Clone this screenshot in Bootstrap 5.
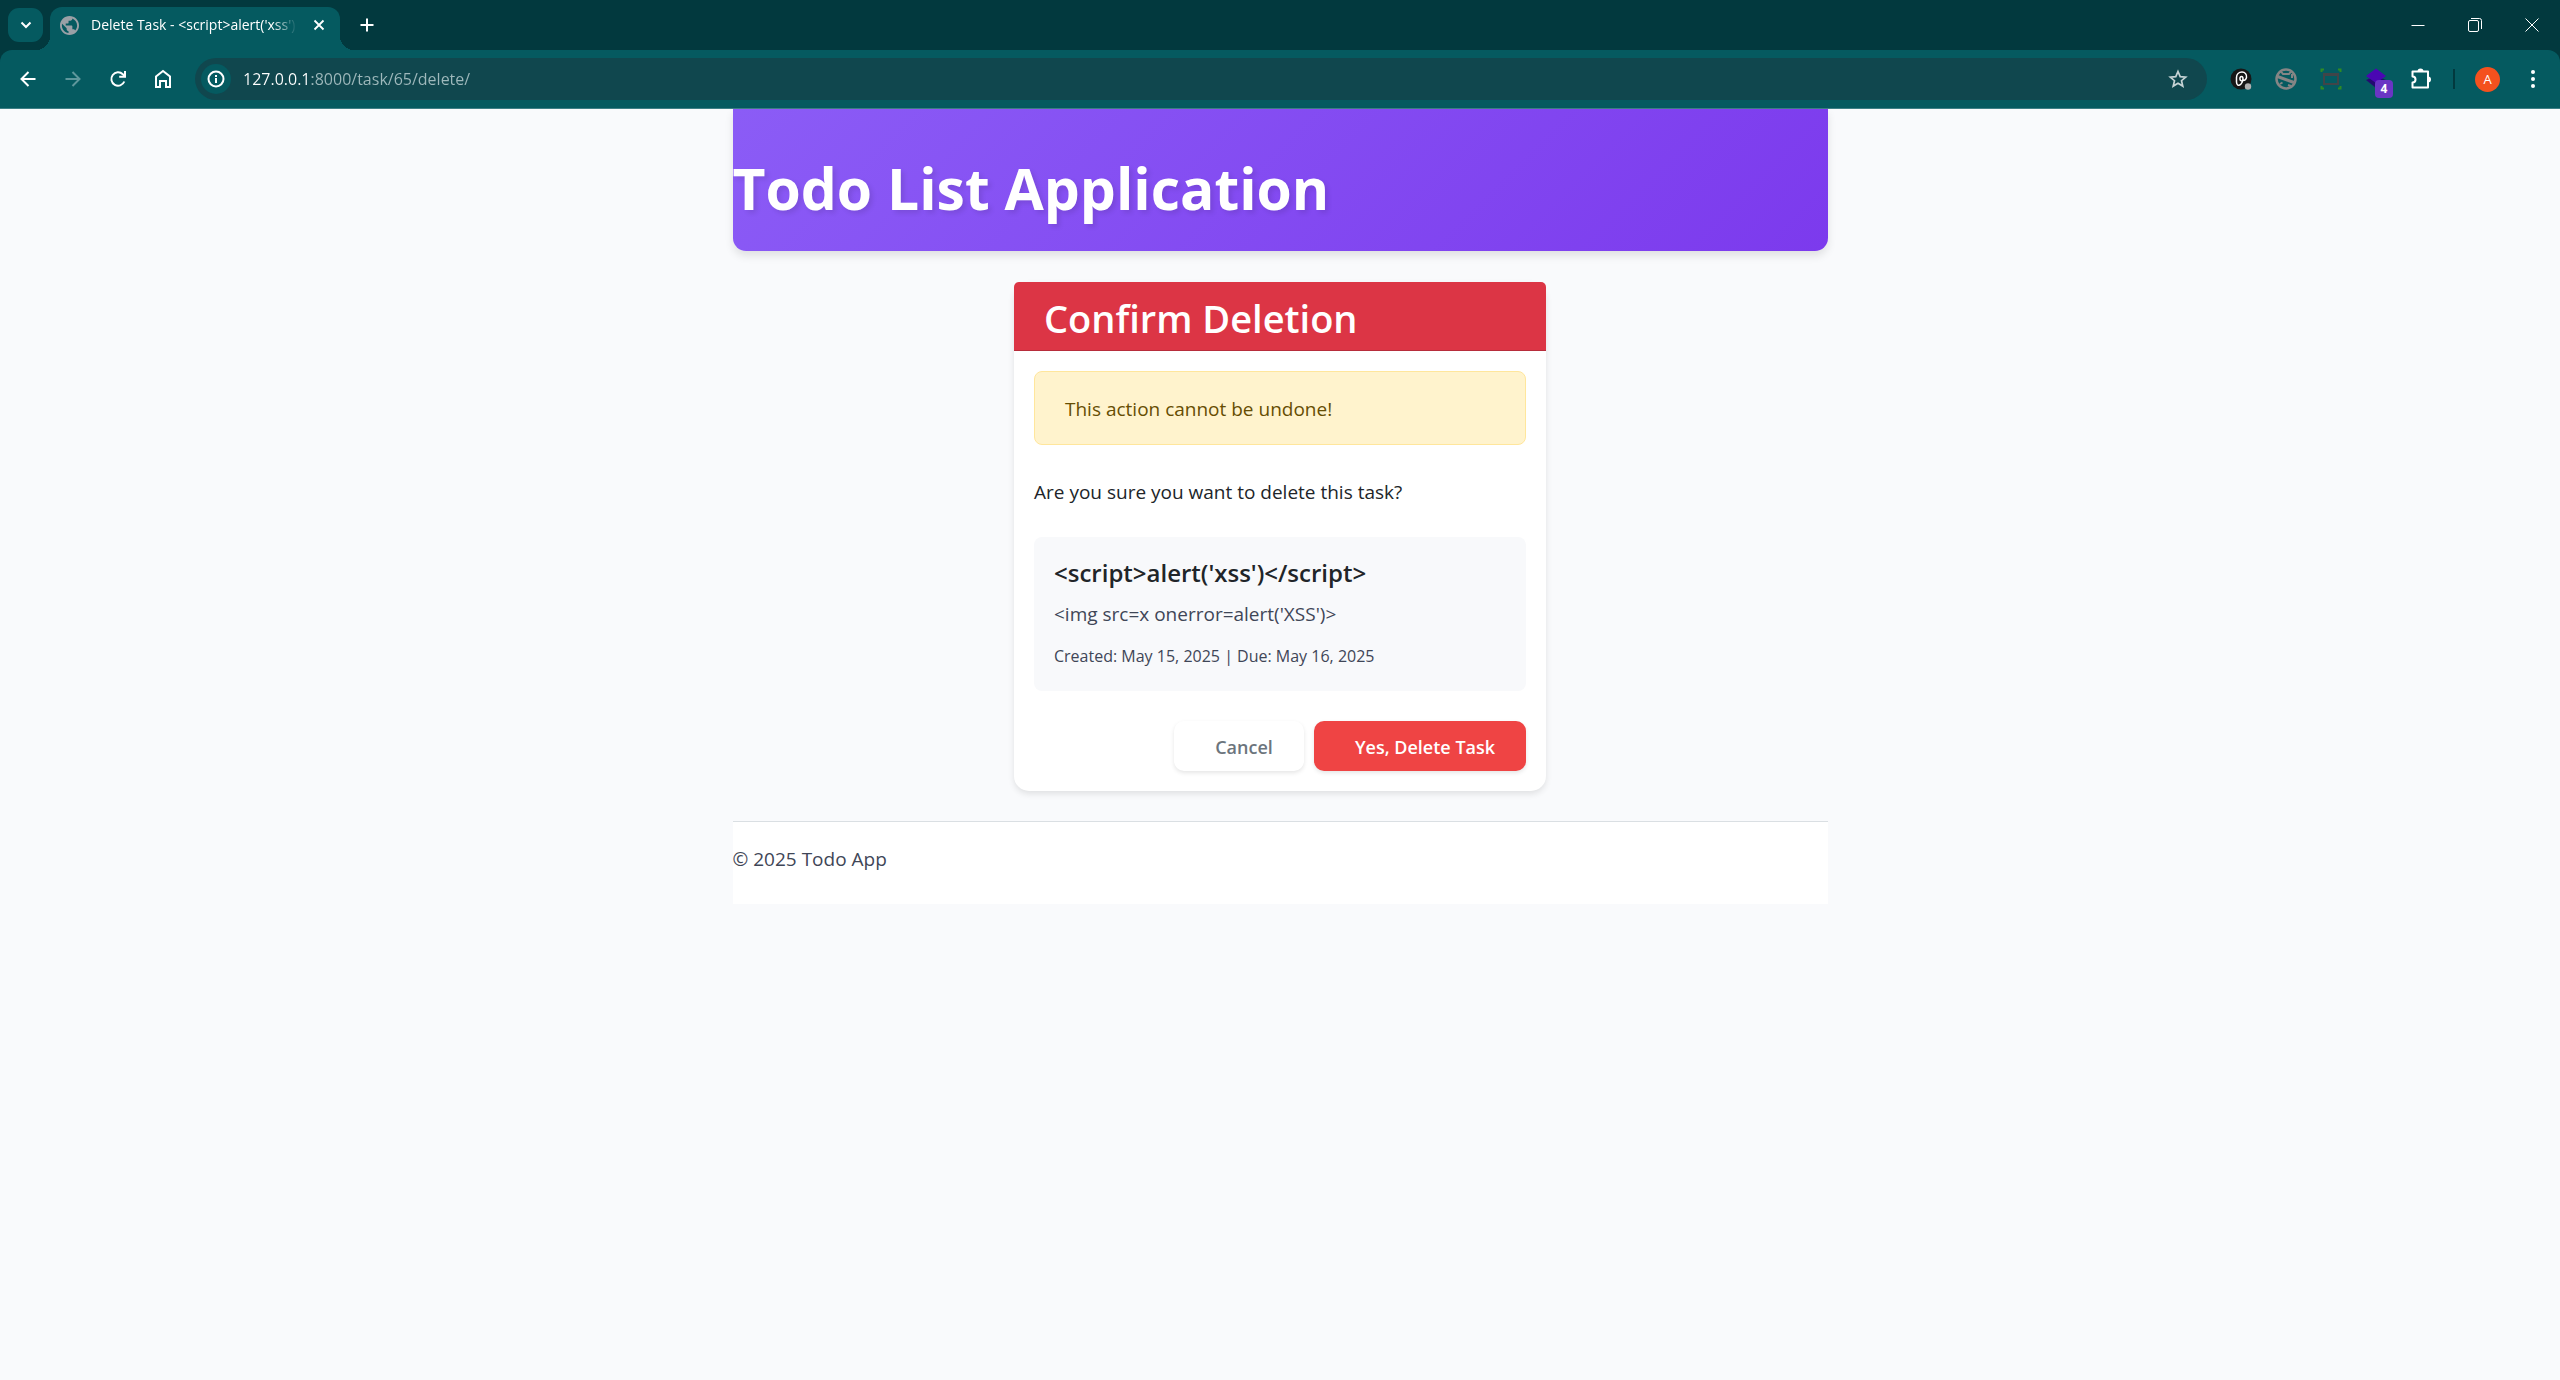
<!DOCTYPE html>
<html lang="en">
<head>
<meta charset="utf-8">
<meta name="viewport" content="width=device-width, initial-scale=1">
<title>Delete Task</title>
<link rel="stylesheet" href="https://cdn.jsdelivr.net/npm/bootstrap@5.3.0/dist/css/bootstrap.min.css">
<style>
body{font-family:"Open Sans","Noto Sans",sans-serif;font-size:19px;line-height:32px;background:#f9fafc;color:#212529}
/* browser window */
.tabstrip{height:50px;background:#02393e;color:#fff}
.tool-btn{border:0;background:none;padding:0;color:#fff;width:45px;height:42px;display:flex;align-items:center;justify-content:center;flex:none}
.tab-search{width:35px;height:34px;margin:8px 7px 8px 8px;border-radius:11px;background:#055a60}
.active-tab{width:290px;height:43px;margin-top:7px;padding:0 10px 7px;border-radius:12px 12px 0 0;background:#055a60;position:relative}
.active-tab::before,.active-tab::after{content:"";position:absolute;bottom:0;width:14px;height:14px}
.active-tab::before{left:-14px;background:radial-gradient(circle at 0 0,transparent 14px,#055a60 14px)}
.active-tab::after{right:-14px;background:radial-gradient(circle at 100% 0,transparent 14px,#055a60 14px)}
.tab-title{width:211px;font-size:14px;line-height:20px;white-space:nowrap;overflow:hidden;-webkit-mask-image:linear-gradient(90deg,#000 185px,transparent 210px)}
.close-tab{width:22px;height:22px}
.win-btn{width:57px}
.toolbar-wrap{background:#02393e}
.toolbar{height:59px;padding:8px 5px;border-bottom:1px solid #3d7f86;border-radius:12px 12px 0 0;background:#055a60}
.address{height:42px;border-radius:21px;background:#10474e;margin:0 11px 0 10px;padding:0 7px 0 6px;min-width:0}
.site-info{width:30px;height:30px;border-radius:50%;background:#055a60}
.address input{border:0;outline:0;font-size:16px;line-height:24px;padding:0;margin-left:12px;color:transparent;background:linear-gradient(90deg,#fff 69px,#9fb9bc 69px);-webkit-background-clip:text;background-clip:text;min-width:0}
.tool-divider{width:2px;height:20px;margin:0 10px;background:#02393e}
.avatar{width:25px;height:25px;border-radius:50%;background:#f4511e;font-size:13px;line-height:25px}
.ext{position:relative}
.ext-count{position:absolute;left:22px;top:22px;width:18px;height:18px;border-radius:4px;background:#6a35c4;font-size:12px;line-height:18px;font-weight:700}
/* page */
.page-shell{width:100%;max-width:1095px;margin:0 auto}
.app-header{padding:43px 0 27px;border-radius:0 0 13px 13px;background:linear-gradient(135deg,#8b5cf6,#7c3aed);box-shadow:0 5px 8px rgba(0,0,0,.1);color:#fff}
.app-header h1{font-size:57px;line-height:72px;font-weight:700;text-shadow:3px 3px 5px rgba(0,0,0,.1)}
.confirm{max-width:532px;margin:31px auto 30px;border:0;border-radius:15px;box-shadow:0 3px 6px rgba(0,0,0,.1)}
.confirm .card-header{padding:12px 30px 8px;border-radius:5px 5px 0 0;border-bottom:1px solid #b72d3b;background:#dc3545;color:#fff}
.confirm h2{font-size:38px;line-height:48px;font-weight:600}
.confirm .card-body{padding:20px}
.notice{padding:21px 30px 19px;margin-bottom:31px;border-radius:8px;background:#fff3cd;border:1px solid #ffe69c;color:#664d03}
.task-box{padding:21px 20px 19px;margin:29px 0 30px;border-radius:8px;background:#f8f9fb}
.task-box h3{font-size:24px;line-height:30px;font-weight:600;margin-bottom:10px}
.task-body{margin-bottom:10px}
.soft{color:#3f4657}
.task-meta{font-size:16px}
.confirm .btn{height:50px;border:0;border-radius:10px;font-size:18px;font-weight:600;line-height:30px;padding:11px 30px 9px 40px;box-shadow:0 2px 4px rgba(0,0,0,.1)}
.actions{gap:10px}
.btn-back{width:130px;background:#fff;color:#6c757d}
.btn-remove{width:212px;background:#ef4444;color:#fff}
.app-footer{padding:21px 0 29px;background:#fff;border-top:1px solid #dadfe3}
</style>
<script src="https://cdn.jsdelivr.net/npm/bootstrap@5.3.0/dist/js/bootstrap.bundle.min.js"></script>
</head>
<body>
<header>
  <div class="tabstrip d-flex">
    <button class="tool-btn tab-search" aria-label="Search tabs"><svg width="12" height="8" viewBox="0 0 12 8" fill="none" stroke="#fff" stroke-width="2"><path d="M1.500 1.500 6 6l4.500-4.500"/></svg></button>
    <div class="active-tab d-flex align-items-center">
      <svg width="19" height="19" viewBox="2 2 20 20"><path fill="#9aa0a6" d="M12 2C6.480 2 2 6.480 2 12s4.480 10 10 10 10-4.480 10-10S17.520 2 12 2zm-1 17.930c-3.950-.490-7-3.850-7-7.930 0-.620.080-1.210.210-1.790L9 15v1c0 1.100.900 2 2 2v1.930zm6.900-2.540c-.260-.810-1-1.390-1.900-1.390h-1v-3c0-.550-.450-1-1-1H8v-2h2c.550 0 1-.450 1-1V7h2c1.100 0 2-.900 2-2v-.410c2.930 1.190 5 4.060 5 7.410 0 2.080-.800 3.970-2.100 5.390z"/></svg>
      <div class="tab-title ms-2 ps-1">Delete Task - &lt;script&gt;alert('xss')</div>
      <button class="tool-btn close-tab ms-auto" aria-label="Close tab"><svg width="12" height="12" viewBox="0 0 12 12" stroke="#fff" stroke-width="1.800"><path d="m1.500 1.500 9 9m0-9-9 9"/></svg></button>
    </div>
    <button class="tool-btn ms-1 mt-1" aria-label="New tab"><svg width="14" height="14" viewBox="0 0 14 14" stroke="#fff" stroke-width="2"><path d="M7 .5v13M.5 7h13"/></svg></button>
    <div class="ms-auto d-flex pt-1">
      <button class="tool-btn win-btn" aria-label="Minimize"><svg width="14" height="14" viewBox="0 0 14 14" stroke="#fff"><path d="M.5 7.500h13"/></svg></button>
      <button class="tool-btn win-btn" aria-label="Restore"><svg width="14" height="14" viewBox="0 0 14 14" fill="none" stroke="#fff"><rect x=".5" y="2.500" width="10" height="11" rx="1.500"/><path d="M3 .5h8.500a2 2 0 0 1 2 2V11"/></svg></button>
      <button class="tool-btn win-btn" aria-label="Close"><svg width="14" height="14" viewBox="0 0 14 14" stroke="#fff"><path d="m.5.5 13 13m0-13-13 13"/></svg></button>
    </div>
  </div>
  <div class="toolbar-wrap">
    <div class="toolbar d-flex align-items-center">
      <button class="tool-btn" aria-label="Back"><svg width="16" height="16" viewBox="0 0 16 16" fill="none" stroke="#fff" stroke-width="2"><path d="M15.500 8H2M8.500 1 1.500 8l7 7"/></svg></button>
      <button class="tool-btn" aria-label="Forward"><svg width="16" height="16" viewBox="0 0 16 16" fill="none" stroke="#5f979c" stroke-width="2"><path d="M.5 8H14M7.500 1l7 7-7 7"/></svg></button>
      <button class="tool-btn" aria-label="Reload"><svg width="18" height="18" viewBox="0 0 18 18" fill="none" stroke="#fff" stroke-width="2"><path d="M15.300 11.500A6.700 6.700 0 1 1 13.800 4.300L16 6.500"/><path d="M16 1v5.800h-5.800"/></svg></button>
      <button class="tool-btn" aria-label="Home"><svg width="18" height="20" viewBox="0 0 18 20" fill="none" stroke="#fff" stroke-width="2"><path d="M2 7.500 9 2l7 5.500V18h-4v-6H6v6H2Z"/></svg></button>
      <div class="address d-flex flex-grow-1 align-items-center">
        <button class="tool-btn site-info" aria-label="Site information"><svg width="18" height="18" viewBox="0 0 18 18" fill="none" stroke="#fff" stroke-width="2"><circle cx="9" cy="9" r="7.500"/><path d="M9 8v5M9 5v2"/></svg></button>
        <input class="flex-grow-1" type="text" aria-label="Address" value="127.0.0.1:8000/task/65/delete/">
        <button class="tool-btn" aria-label="Bookmark this tab"><svg width="20" height="20" viewBox="0 0 20 20" fill="none" stroke="#c6d3d5" stroke-width="1.700"><path d="m10 2.500 2.200 5.100 5.500.5-4.200 3.600 1.300 5.400-4.800-2.900-4.800 2.900 1.300-5.400-4.200-3.600 5.500-.5Z"/></svg></button>
      </div>
      <button class="tool-btn" aria-label="Extension"><svg width="22" height="22" viewBox="0 0 22 22"><circle cx="11" cy="11" r="10.500" fill="#171717"/><path d="M13 12.500c-3.500 2-4-4-1.500-4s1.500 5-.5 7.500c-2.500 2.500-4.500 1-4.500-2V9.500C6.500 6 9 4 12 4s5 2.500 4.500 5.500-2 3-3.500 3" fill="none" stroke="#fff" stroke-width="1.500"/><circle cx="18" cy="18.500" r="3.200" fill="#b0b0b0"/></svg></button>
      <button class="tool-btn" aria-label="Extension"><svg width="22" height="22" viewBox="0 0 22 22" fill="none"><circle cx="11" cy="11" r="9.500" stroke="#858585" stroke-width="2.500"/><path d="m2.500 8.500 16.500 6" stroke="#858585" stroke-width="3"/><path d="M6 3.500 8 6h6l2-2.500M17 6v4M5 16l2.500-1.500M13 17l3 1" stroke="#858585" stroke-width="2"/></svg></button>
      <button class="tool-btn" aria-label="Extension"><svg width="22" height="22" viewBox="0 0 22 22" fill="none"><rect x="4" y="6" width="14" height="10" stroke="#404548" stroke-width="2"/><path d="M4 7h14" stroke="#404548" stroke-width="2"/><path d="M1.500 4V1.500H4M18 1.500h2.500V4M20.500 18v2.500H18M4 20.500H1.500V18" stroke="#2f8a25" stroke-width="2"/></svg></button>
      <button class="tool-btn ext" aria-label="Extension, 4 items"><svg width="22" height="22" viewBox="0 0 22 22"><path d="m1 12 10-4 10 4-10 8Z" fill="#230a70"/><path d="M11 .5 21 8l-10 7L1 8Z" fill="#4a06b3"/></svg><span class="ext-count">4</span></button>
      <button class="tool-btn" aria-label="Extensions"><svg width="22" height="22" viewBox="0 0 22 22" fill="none" stroke="#fff" stroke-width="2" stroke-linejoin="round"><path d="M2.500 3.500H18v16H2.500v-5a3 3 0 0 0 0-6Z"/><path d="M7.500 3.500a3 3 0 0 1 6 0ZM18 8.500a3 3 0 0 1 0 6Z" fill="#fff" stroke="none"/></svg></button>
      <span class="tool-divider"></span>
      <button class="tool-btn" aria-label="Profile"><span class="avatar">A</span></button>
      <button class="tool-btn" aria-label="Menu"><svg width="4" height="18" viewBox="0 0 4 18" fill="#fff"><circle cx="2" cy="2" r="2"/><circle cx="2" cy="9" r="2"/><circle cx="2" cy="16" r="2"/></svg></button>
    </div>
  </div>
</header>
<div class="page-shell">
  <div class="app-header"><h1 class="m-0">Todo List Application</h1></div>
  <main class="card confirm">
    <div class="card-header"><h2 class="m-0">Confirm Deletion</h2></div>
    <div class="card-body">
      <div class="notice" role="alert">This action cannot be undone!</div>
      <p class="m-0">Are you sure you want to delete this task?</p>
      <div class="task-box">
        <h3>&lt;script&gt;alert('xss')&lt;/script&gt;</h3>
        <p class="soft task-body">&lt;img src=x onerror=alert('XSS')&gt;</p>
        <p class="soft task-meta m-0">Created: May 15, 2025 | Due: May 16, 2025</p>
      </div>
      <div class="actions d-flex justify-content-end">
        <a class="btn btn-back" href="#">Cancel</a>
        <button class="btn btn-remove text-nowrap" type="submit">Yes, Delete Task</button>
      </div>
    </div>
  </main>
  <footer class="app-footer"><p class="soft m-0">© 2025 Todo App</p></footer>
</div>
</body>
</html>
